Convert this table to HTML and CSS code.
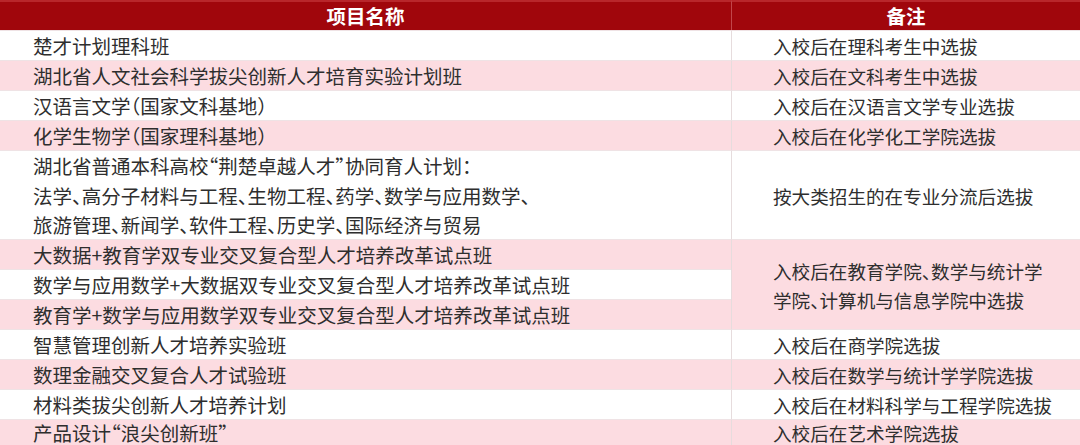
FILE: index.html
```html
<!DOCTYPE html>
<html lang="zh-CN">
<head>
<meta charset="utf-8">
<link rel="stylesheet" href="styles.css">
</head>
<body>
<div class="tbl">
  <div class="th">项目名称</div><div class="th r">备注</div>
  <div class="td w">楚才计划理科班</div><div class="td r w">入校后在理科考生中选拔</div>
  <div class="td p">湖北省人文社会科学拔尖创新人才培育实验计划班</div><div class="td r p">入校后在文科考生中选拔</div>
  <div class="td w">汉语言文学（国家文科基地）</div><div class="td r w">入校后在汉语言文学专业选拔</div>
  <div class="td p">化学生物学（国家理科基地）</div><div class="td r p">入校后在化学化工学院选拔</div>
  <div class="td w multi">湖北省普通本科高校“荆楚卓越人才”协同育人计划：<br>法学、高分子材料与工程、生物工程、药学、数学与应用数学、<br>旅游管理、新闻学、软件工程、历史学、国际经济与贸易</div><div class="td r w">按大类招生的在专业分流后选拔</div>
  <div class="td p">大数据+教育学双专业交叉复合型人才培养改革试点班</div><div class="td r p span3 multi">入校后在教育学院、数学与统计学<br>学院、计算机与信息学院中选拔</div>
  <div class="td w">数学与应用数学+大数据双专业交叉复合型人才培养改革试点班</div>
  <div class="td p">教育学+数学与应用数学双专业交叉复合型人才培养改革试点班</div>
  <div class="td w">智慧管理创新人才培养实验班</div><div class="td r w">入校后在商学院选拔</div>
  <div class="td p">数理金融交叉复合人才试验班</div><div class="td r p">入校后在数学与统计学学院选拔</div>
  <div class="td w">材料类拔尖创新人才培养计划</div><div class="td r w">入校后在材料科学与工程学院选拔</div>
  <div class="td p last">产品设计“浪尖创新班”</div><div class="td r p last">入校后在艺术学院选拔</div>
</div>
</body>
</html>
```
FILE: styles.css
```css
html, body {
  margin: 0;
  padding: 0;
  background: #ffffff;
  overflow: hidden;
}
.tbl {
  display: grid;
  width: 1080px;
  grid-template-columns: 731px 349px;
  grid-template-rows: 30px repeat(4, 30px) 89px repeat(6, 30px) 26px;
  font-family: "Noto Sans CJK SC", "Noto Sans", sans-serif;
  font-size: 19.5px;
  color: #2e2e2e;
  font-feature-settings: "halt";
}
.th {
  box-sizing: border-box;
  background: #a0060c;
  border-top: 2px solid #b8262b;
  color: #ffffff;
  font-size: 19.5px;
  font-weight: 700;
  display: flex;
  align-items: center;
  justify-content: center;
  padding-bottom: 2px;
}
.th.r { border-left: 1px solid #c2454a; }
.td {
  box-sizing: border-box;
  display: flex;
  align-items: center;
  padding: 1px 0 0 33px;
  border-top: 1px solid #efe3e5;
  white-space: nowrap;
  line-height: 28px;
}
.td.r {
  padding-left: 41px;
  font-size: 18.6px;
  border-left: 1px solid #e6dcdd;
}
.td.w { background: #ffffff; }
.td.p { background: #fcdce1; }
.td.multi { line-height: 29.5px; }
.td.last { line-height: 24px; padding-top: 1px; }
.span3 { grid-row: span 3; }
```
